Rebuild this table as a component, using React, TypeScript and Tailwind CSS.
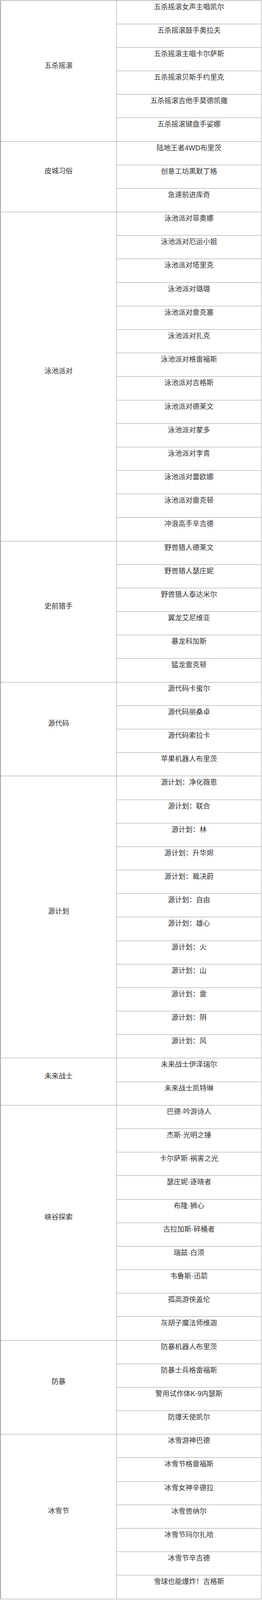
const groups: { name: string; items: string[] }[] = [
  {
    name: "五杀摇滚",
    items: [
      "五杀摇滚女声主唱凯尔",
      "五杀摇滚鼓手奥拉夫",
      "五杀摇滚主唱卡尔萨斯",
      "五杀摇滚贝斯手约里克",
      "五杀摇滚吉他手莫德凯撒",
      "五杀摇滚键盘手娑娜",
    ],
  },
  {
    name: "皮城习俗",
    items: ["陆地王者4WD布里茨", "创意工坊黑默丁格", "急速前进库奇"],
  },
  {
    name: "泳池派对",
    items: [
      "泳池派对菲奥娜",
      "泳池派对厄运小姐",
      "泳池派对塔里克",
      "泳池派对璐璐",
      "泳池派对雷克塞",
      "泳池派对扎克",
      "泳池派对格雷福斯",
      "泳池派对吉格斯",
      "泳池派对德莱文",
      "泳池派对蒙多",
      "泳池派对李青",
      "泳池派对蕾欧娜",
      "泳池派对雷克顿",
      "冲浪高手辛吉德",
    ],
  },
  {
    name: "史前猎手",
    items: [
      "野兽猎人德莱文",
      "野兽猎人瑟庄妮",
      "野兽猎人泰达米尔",
      "翼龙艾尼维亚",
      "暴龙科加斯",
      "猛龙雷克顿",
    ],
  },
  {
    name: "源代码",
    items: ["源代码卡蜜尔", "源代码丽桑卓", "源代码索拉卡", "苹果机器人布里茨"],
  },
  {
    name: "源计划",
    items: [
      "源计划：净化薇恩",
      "源计划：联合",
      "源计划：林",
      "源计划：升华烬",
      "源计划：裁决蔚",
      "源计划：自由",
      "源计划：雄心",
      "源计划：火",
      "源计划：山",
      "源计划：雷",
      "源计划：阴",
      "源计划：风",
    ],
  },
  {
    name: "未来战士",
    items: ["未来战士伊泽瑞尔", "未来战士凯特琳"],
  },
  {
    name: "峡谷探索",
    items: [
      "巴德·吟游诗人",
      "杰斯·光明之锤",
      "卡尔萨斯·祸害之光",
      "瑟庄妮·逐晓者",
      "布隆·狮心",
      "古拉加斯·碎桶者",
      "瑞兹·白须",
      "韦鲁斯·迅箭",
      "孤高游侠盖伦",
      "灰胡子魔法师维迦",
    ],
  },
  {
    name: "防暴",
    items: ["防暴机器人布里茨", "防暴士兵格雷福斯", "警用试作体K-9内瑟斯", "防爆天使凯尔"],
  },
  {
    name: "冰雪节",
    items: [
      "冰雪游神巴德",
      "冰雪节格雷福斯",
      "冰雪女神辛德拉",
      "冰雪兽纳尔",
      "冰雪节玛尔扎哈",
      "冰雪节辛吉德",
      "雪球也能爆炸！吉格斯",
    ],
  },
];

const TOTAL_ROWS = groups.reduce((n, g) => n + g.items.length, 0);
const TABLE_H = 4092;
const isTallRow = (i: number) =>
  Math.floor(((i + 1) * TABLE_H) / TOTAL_ROWS) - Math.floor((i * TABLE_H) / TOTAL_ROWS) > 60;

export default function App() {
  let rowIndex = 0;

  return (
    <div
      className="bg-white text-[#333] text-[18px]"
      style={{ fontFamily: '"Liberation Sans", "Noto Sans CJK SC", sans-serif' }}
    >
      <div className="box-border mt-px ml-px w-[669px] border-t border-l border-r border-t-[#8c8c8c] border-l-[#4a4a4a] border-r-[#9a9a9a]">
        {groups.map((group) => (
          <div key={group.name} className="flex">
            {/* Category cell */}
            <div className="box-border flex w-[297px] shrink-0 items-center justify-center border-r border-b border-[#9a9a9a]">
              <span className="pb-[29px] leading-[26px]">{group.name}</span>
            </div>

            {/* Skin list */}
            <div className="flex flex-1 flex-col">
              {group.items.map((item) => {
                const tall = isTallRow(rowIndex++);
                return (
                  <div
                    key={item}
                    className={`box-border shrink-0 overflow-hidden border-b border-[#9a9a9a] pt-[3px] text-center leading-[26px] whitespace-nowrap ${
                      tall ? "h-[61px]" : "h-[60px]"
                    }`}
                  >
                    {item}
                  </div>
                );
              })}
            </div>
          </div>
        ))}
      </div>
    </div>
  );
}
